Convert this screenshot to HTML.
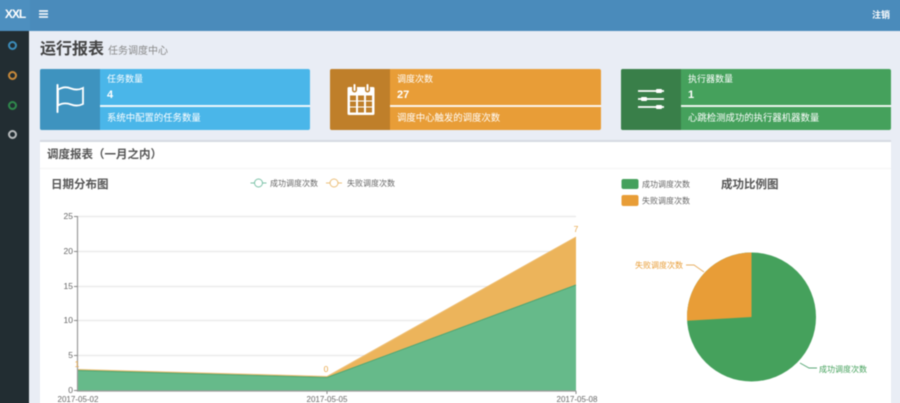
<!DOCTYPE html>
<html lang="zh">
<head>
<meta charset="utf-8">
<title>任务调度中心</title>
<style>
*{box-sizing:border-box;margin:0;padding:0}
html,body{width:900px;height:403px;overflow:hidden;background:#e9edf5}
body{position:relative;font-family:"Liberation Sans","Noto Sans CJK SC",sans-serif;color:#444}
#w{position:absolute;left:0;top:0;width:900px;height:403px;filter:blur(.4px)}
.a{position:absolute;white-space:nowrap}
.top{left:-6px;top:-6px;width:912px;height:37px;background:#4a8bbb}
.logo{left:-6px;top:-6px;width:36px;height:37px;background:#4d8fbf;color:#fff;font-size:12px;font-weight:bold;line-height:41px;padding-left:6px;text-align:center;letter-spacing:-1px}
.side{left:-6px;top:31px;width:35px;height:380px;background:#222d32}
.dot{position:absolute;left:14px;width:9px;height:9px;border-radius:50%;border:2px solid}
.box{position:absolute;top:69px;height:60.5px;color:#fff;border-radius:2px;overflow:hidden}
.ic{position:absolute;left:0;top:0;width:60px;height:100%}
.t1{position:absolute;left:67px;top:4px;font-size:9px;line-height:12px;white-space:nowrap}
.t2{position:absolute;left:67px;top:19px;font-size:11px;font-weight:bold;line-height:14px}
.ln{position:absolute;left:60px;right:0;top:36px;height:2px;background:#fff;opacity:.9}
.t3{position:absolute;left:67px;top:43px;font-size:9.4px;line-height:12px;white-space:nowrap}
.panel{left:40px;top:140px;width:851px;height:272px;background:#fff;border-top:2px solid #d6dae2}
.phead{left:40px;top:168px;width:851px;height:1px;background:#f4f4f4}
</style>
</head>
<body>
<div id="w">
<div class="a top"></div>
<div class="a logo">XXL</div>
<svg class="a" style="left:39px;top:10px" width="10" height="9"><path d="M0 1h9M0 4h9M0 7h9" stroke="#fff" stroke-width="1.6"/></svg>
<div class="a" style="left:872px;top:9px;color:#fff;font-size:9px;font-weight:bold;line-height:12px">注销</div>

<div class="a side">
<div class="dot" style="top:10px;border-color:#3c8dbc"></div>
<div class="dot" style="top:40px;border-color:#c98a3a"></div>
<div class="dot" style="top:70px;border-color:#2f8a4c"></div>
<div class="dot" style="top:99px;border-color:#b8bcbe"></div>
</div>

<div class="a" style="left:40px;top:39px;font-size:16px;font-weight:bold;line-height:22px;color:#444">运行报表</div>
<div class="a" style="left:108px;top:45px;font-size:10px;line-height:13px;color:#888">任务调度中心</div>

<div class="box" style="left:40px;width:270px;background:#4ab6e9">
<div class="ic" style="background:#3e93bf"></div>
<svg class="a" style="left:15px;top:15px" width="32" height="30" fill="none" stroke="#fff"><path d="M2.500 1v27" stroke-width="2" stroke-linecap="round"/><path d="M3 5.500c6-3 9-2.500 13-1s8 1.500 12-.5v16c-4 2-8 2-12 .5s-8-2-13 1z" stroke-width="1.800"/></svg>
<div class="t1">任务数量</div><div class="t2">4</div><div class="ln"></div><div class="t3">系统中配置的任务数量</div>
</div>

<div class="box" style="left:330px;width:271px;background:#e89d37">
<div class="ic" style="background:#bf7f2a"></div>
<svg class="a" style="left:16px;top:14px" width="30" height="33"><path d="M3 4h24a1.500 1.500 0 0 1 1.500 1.500v25a1.500 1.500 0 0 1-1.500 1.500H3a1.500 1.500 0 0 1-1.500-1.500V5.500A1.500 1.500 0 0 1 3 4z" fill="#fff"/><g fill="#bf7f2a"><rect x="4" y="12.500" width="6" height="5"/><rect x="12" y="12.500" width="6" height="5"/><rect x="20" y="12.500" width="6" height="5"/><rect x="4" y="18.500" width="6" height="5"/><rect x="12" y="18.500" width="6" height="5"/><rect x="20" y="18.500" width="6" height="5"/><rect x="4" y="24.500" width="6" height="5"/><rect x="12" y="24.500" width="6" height="5"/><rect x="20" y="24.500" width="6" height="5"/><rect x="6" y="2.500" width="5" height="7" rx="2.500"/><rect x="19" y="2.500" width="5" height="7" rx="2.500"/></g><rect x="7.500" y="1" width="2" height="7" rx="1" fill="#fff"/><rect x="20.500" y="1" width="2" height="7" rx="1" fill="#fff"/></svg>
<div class="t1">调度次数</div><div class="t2">27</div><div class="ln"></div><div class="t3">调度中心触发的调度次数</div>
</div>

<div class="box" style="left:621px;width:270px;background:#45a15c">
<div class="ic" style="background:#397f49"></div>
<svg class="a" style="left:16px;top:19px" width="30" height="24"><path d="M1 3h26M1 11h26M1 19h26" stroke="#fff" stroke-width="1.700"/><rect x="19" y="1" width="6" height="4" rx="1" fill="#fff"/><rect x="4" y="9" width="6" height="4" rx="1" fill="#fff"/><rect x="19" y="17" width="6" height="4" rx="1" fill="#fff"/></svg>
<div class="t1">执行器数量</div><div class="t2">1</div><div class="ln"></div><div class="t3">心跳检测成功的执行器机器数量</div>
</div>

<div class="a panel"></div>
<div class="a phead"></div>
<div class="a" style="left:47px;top:148px;font-size:11.500px;font-weight:bold;line-height:15px;color:#555">调度报表（一月之内）</div>
<div class="a" style="left:51px;top:178px;font-size:11.500px;font-weight:bold;line-height:15px;color:#555">日期分布图</div>
<div class="a" style="left:721px;top:178px;font-size:11.500px;font-weight:bold;line-height:15px;color:#555">成功比例图</div>

<svg class="a" style="left:0;top:0;overflow:visible" width="900" height="403" font-family="&quot;Liberation Sans&quot;,&quot;Noto Sans CJK SC&quot;,sans-serif">
<g stroke="#e8e8e8" stroke-width="1.200">
<path d="M78 216.500H576M78 251.500H576M78 286.500H576M78 320.500H576M78 355.500H576"/>
</g>
<path d="M77.500 369.500L327 377L576 237V390.500H77.500z" fill="#ecb45b"/>
<path d="M77.500 370.500L327 377.500L576 285V390.500H77.500z" fill="#66ba8a"/>
<path d="M77.500 369.500L327 376.500L576 237" fill="none" stroke="#edbb6c" stroke-width="1"/>
<path d="M77.500 370.500L327 377.500L576 285" fill="none" stroke="#4fa673" stroke-width="1"/>
<path d="M77.500 216V391H576" fill="none" stroke="#9a9a9a" stroke-width="1.200"/>
<path d="M74 216.500h3.500M74 251.500h3.500M74 286.500h3.500M74 320.500h3.500M74 355.500h3.500M74 390.500h3.500M327 391v3M576 391v3" stroke="#888" stroke-width="1"/>
<g font-size="8.500" fill="#666" text-anchor="end">
<text x="73" y="219">25</text><text x="73" y="254">20</text><text x="73" y="289">15</text><text x="73" y="323">10</text><text x="73" y="358">5</text><text x="73" y="393">0</text>
</g>
<g font-size="8" fill="#666" text-anchor="middle">
<text x="78" y="402">2017-05-02</text><text x="327" y="402">2017-05-05</text><text x="577" y="402">2017-05-08</text>
</g>
<g font-size="8.500" fill="#e8a84c" text-anchor="middle">
<text x="77" y="367">1</text><text x="326" y="372">0</text><text x="576" y="232">7</text>
</g>
<path d="M250.500 183h16" stroke="#7cc2a8" stroke-width="1"/><circle cx="258.500" cy="183" r="4" fill="#fff" stroke="#7cc2a8"/>
<text x="270" y="186" font-size="8" fill="#666">成功调度次数</text>
<path d="M326 183h16" stroke="#ecc07a" stroke-width="1"/><circle cx="334" cy="183" r="4" fill="#fff" stroke="#ecc07a"/>
<text x="347" y="186" font-size="8" fill="#666">失败调度次数</text>

<rect x="621.500" y="179" width="17" height="10" rx="2" fill="#45a15c"/>
<text x="642" y="187" font-size="8" fill="#666">成功调度次数</text>
<rect x="621.500" y="195" width="17" height="11" rx="2" fill="#e89d37"/>
<text x="642" y="203.500" font-size="8" fill="#666">失败调度次数</text>

<circle cx="751.500" cy="317" r="64.500" fill="#45a15c"/>
<path d="M751.500 317V252.500A64.500 64.500 0 0 0 687.100 320.700z" fill="#e89d37"/>
<path d="M704 272L694 265H686" fill="none" stroke="#e8b066" stroke-width="1"/>
<path d="M800 363L809 368H817" fill="none" stroke="#5aa878" stroke-width="1"/>
<text x="635" y="268" font-size="8" fill="#e89d37">失败调度次数</text>
<text x="819" y="372" font-size="8" fill="#45a15c">成功调度次数</text>
</svg>
</div>
</body>
</html>
